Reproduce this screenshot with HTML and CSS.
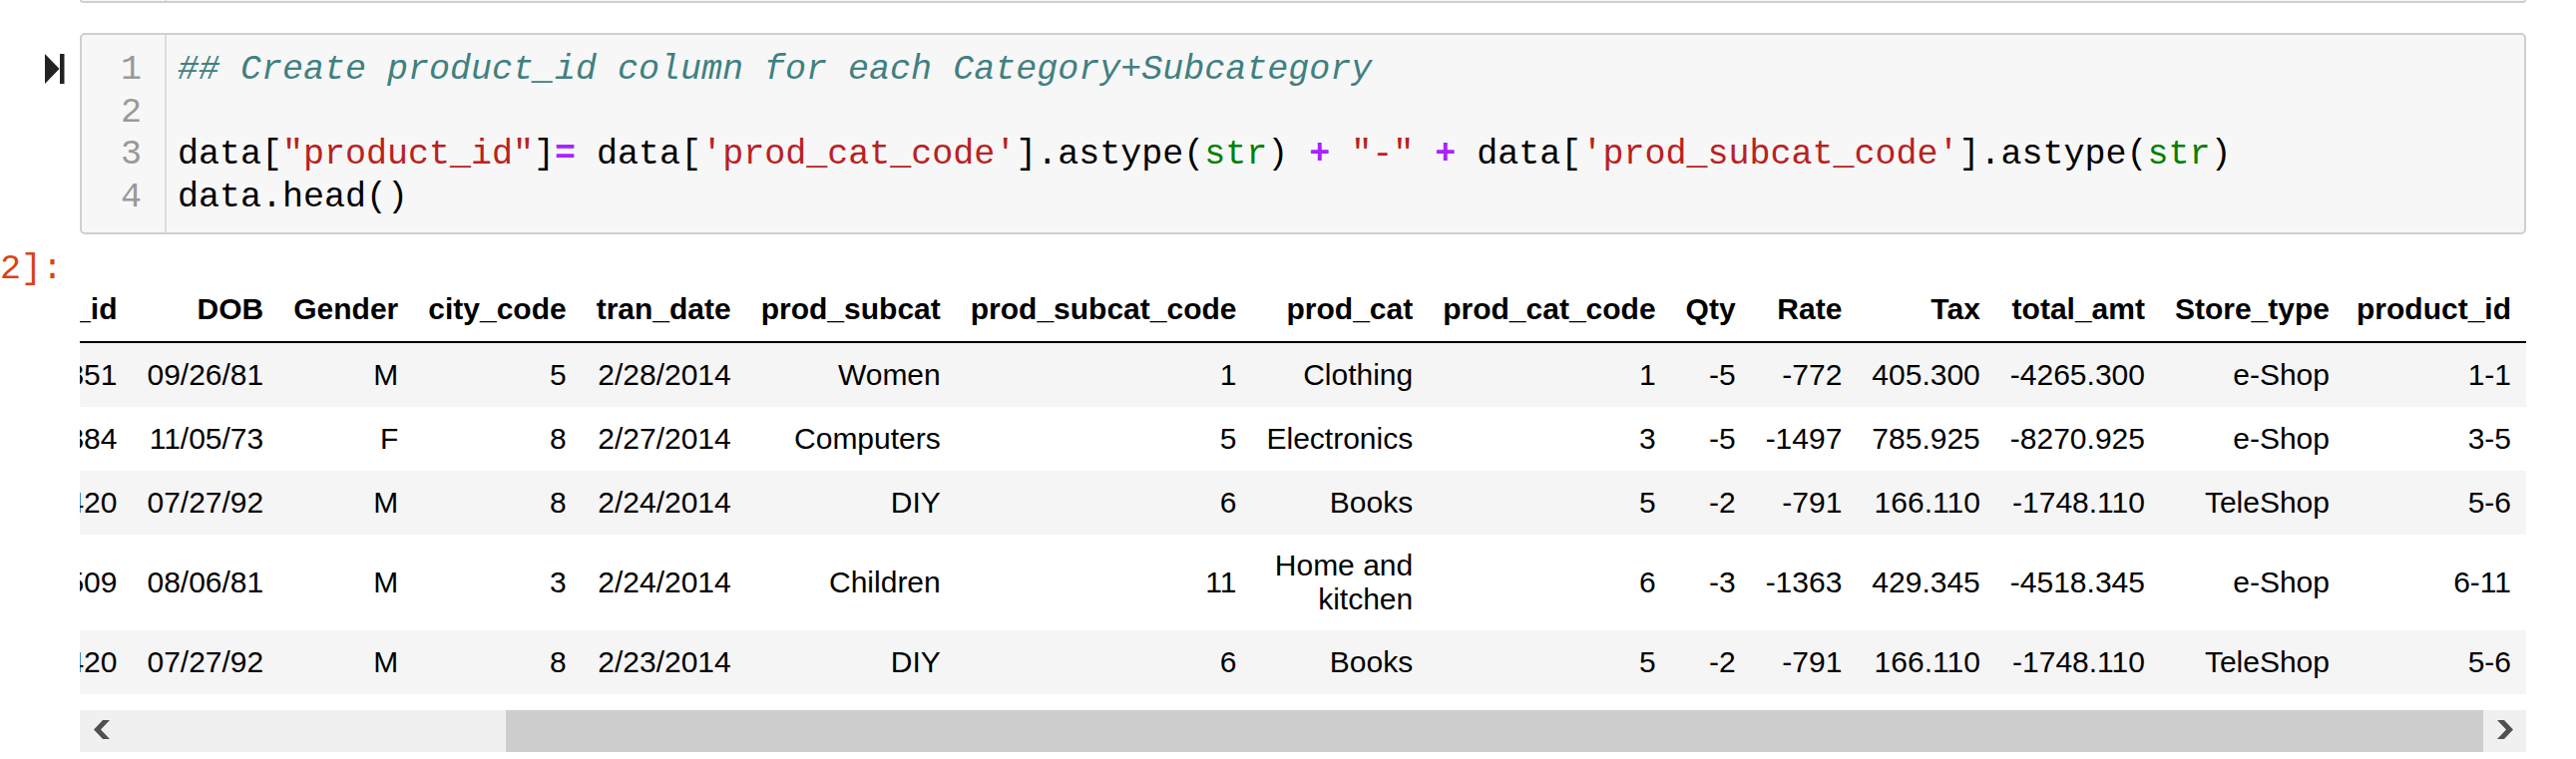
FILE: index.html
```html
<!DOCTYPE html>
<html lang="en">
<head>
<meta charset="utf-8">
<title>Notebook</title>
<link rel="stylesheet" href="styles.css">
</head>
<body>
<div class="notebook">
  <div class="cell prev-cell">
    <div class="prompt"></div>
    <div class="input-box prev-box">
      <div class="gutter"></div>
      <div class="code"></div>
    </div>
  </div>

  <div class="cell">
    <div class="input-row">
      <div class="prompt run-prompt">
        <svg class="run-icon" width="20" height="30" viewBox="0 0 20 30" aria-hidden="true">
          <polygon points="0,0 14.5,15 0,30" fill="#222"/>
          <rect x="15" y="0" width="4.5" height="30" fill="#222"/>
        </svg>
      </div>
      <div class="input-box">
        <div class="gutter">
          <div class="ln">1</div>
          <div class="ln">2</div>
          <div class="ln">3</div>
          <div class="ln">4</div>
        </div>
        <div class="code">
          <div class="line"><span class="cm">## Create product_id column for each Category+Subcategory</span></div>
          <div class="line"> </div>
          <div class="line">data[<span class="st">"product_id"</span>]<span class="op">=</span> data[<span class="st">'prod_cat_code'</span>].astype(<span class="bi">str</span>) <span class="op">+</span> <span class="st">"-"</span> <span class="op">+</span> data[<span class="st">'prod_subcat_code'</span>].astype(<span class="bi">str</span>)</div>
          <div class="line">data.head()</div>
        </div>
      </div>
    </div>

    <div class="output-row">
      <div class="prompt out-prompt"><span class="out-text">Out[52]:</span></div>
      <div class="output">
        <div class="df-wrap">
          <table class="dataframe">
            <thead>
              <tr>
                <th></th><th>transaction_id</th><th>cust_id</th><th>DOB</th><th>Gender</th><th>city_code</th><th>tran_date</th><th>prod_subcat</th><th>prod_subcat_code</th><th>prod_cat</th><th>prod_cat_code</th><th>Qty</th><th>Rate</th><th>Tax</th><th>total_amt</th><th>Store_type</th><th class="last">product_id</th>
              </tr>
            </thead>
            <tbody>
              <tr>
                <th>0</th><td>80712190438</td><td>270351</td><td>09/26/81</td><td>M</td><td>5</td><td>2/28/2014</td><td>Women</td><td>1</td><td>Clothing</td><td>1</td><td>-5</td><td>-772</td><td>405.300</td><td>-4265.300</td><td>e-Shop</td><td class="last">1-1</td>
              </tr>
              <tr>
                <th>1</th><td>29258453508</td><td>270384</td><td>11/05/73</td><td>F</td><td>8</td><td>2/27/2014</td><td>Computers</td><td>5</td><td>Electronics</td><td>3</td><td>-5</td><td>-1497</td><td>785.925</td><td>-8270.925</td><td>e-Shop</td><td class="last">3-5</td>
              </tr>
              <tr>
                <th>2</th><td>51750724947</td><td>273420</td><td>07/27/92</td><td>M</td><td>8</td><td>2/24/2014</td><td>DIY</td><td>6</td><td>Books</td><td>5</td><td>-2</td><td>-791</td><td>166.110</td><td>-1748.110</td><td>TeleShop</td><td class="last">5-6</td>
              </tr>
              <tr>
                <th>3</th><td>93274880719</td><td>271509</td><td>08/06/81</td><td>M</td><td>3</td><td>2/24/2014</td><td>Children</td><td>11</td><td class="wrap">Home and kitchen</td><td>6</td><td>-3</td><td>-1363</td><td>429.345</td><td>-4518.345</td><td>e-Shop</td><td class="last">6-11</td>
              </tr>
              <tr>
                <th>4</th><td>51750724947</td><td>273420</td><td>07/27/92</td><td>M</td><td>8</td><td>2/23/2014</td><td>DIY</td><td>6</td><td>Books</td><td>5</td><td>-2</td><td>-791</td><td>166.110</td><td>-1748.110</td><td>TeleShop</td><td class="last">5-6</td>
              </tr>
            </tbody>
          </table>
        </div>
        <div class="hscroll">
          <div class="sb-btn">
            <svg width="16" height="19" viewBox="0 0 16 19" aria-hidden="true"><polygon points="16,0 9,0 0,9.5 9,19 16,19 7,9.5" fill="#505050"/></svg>
          </div>
          <div class="sb-space"></div>
          <div class="sb-thumb"></div>
          <div class="sb-btn">
            <svg width="16" height="19" viewBox="0 0 16 19" aria-hidden="true"><polygon points="0,0 7,0 16,9.5 7,19 0,19 9,9.5" fill="#505050"/></svg>
          </div>
        </div>
      </div>
    </div>
  </div>
</div>
</body>
</html>
```

FILE: styles.css
```css
html, body {
  margin: 0;
  padding: 0;
  background: #ffffff;
}

body {
  font-family: "Liberation Sans", Arial, sans-serif;
  color: #000;
  overflow: hidden;
}

.notebook {
  width: 2532px;
}

.cell {
  display: flex;
  flex-direction: column;
}

.prev-cell {
  flex-direction: row;
  margin-bottom: 30px;
}

.prompt {
  width: 80px;
  flex: none;
}

.input-box {
  width: 2452px;
  box-sizing: border-box;
  display: flex;
  background: #f7f7f7;
  border: 2px solid #cfcfcf;
  border-radius: 5px;
}

.prev-box {
  height: 3px;
  border-top: none;
  border-radius: 0 0 5px 5px;
}

.gutter {
  width: 85px;
  flex: none;
  box-sizing: border-box;
  border-right: 2px solid #dddddd;
  padding: 14px 23px 14px 0;
  font-family: "Liberation Mono", "Courier New", monospace;
  font-size: 35px;
  line-height: 42.5px;
  color: #999999;
  text-align: right;
}

.prev-box .gutter {
  padding: 0;
}

.code {
  flex: 1;
  padding: 14px 0 14px 11px;
  font-family: "Liberation Mono", "Courier New", monospace;
  font-size: 35px;
  line-height: 42.5px;
  color: #000;
}

.prev-box .code {
  padding: 0;
}

.ln {
  height: 42.5px;
}

.line {
  height: 42.5px;
  white-space: pre;
}

.cm {
  color: #408080;
  font-style: italic;
}

.st {
  color: #ba2121;
}

.op {
  color: #aa22ff;
  font-weight: bold;
}

.bi {
  color: #008000;
}

.input-row {
  display: flex;
}

.run-prompt {
  display: flex;
  align-items: flex-start;
  padding-top: 21px;
  padding-left: 45px;
  box-sizing: border-box;
}

.run-icon {
  display: block;
}

.output-row {
  display: flex;
  margin-top: 14px;
}

.out-prompt {
  display: flex;
  justify-content: flex-end;
  box-sizing: border-box;
  padding-right: 17px;
  font-family: "Liberation Mono", "Courier New", monospace;
  font-size: 35px;
  line-height: 42.5px;
  color: #d84315;
  white-space: nowrap;
}

.out-text {
  flex: none;
}

.output {
  width: 2452px;
  flex: none;
}

.df-wrap {
  margin-top: 29px;
  display: flex;
  justify-content: flex-end;
  overflow: hidden;
}

.dataframe {
  border-collapse: collapse;
  border: none;
  font-size: 30px;
  color: #000;
}

.dataframe thead {
  border-bottom: 2px solid #000;
}

.dataframe th,
.dataframe td {
  text-align: right;
  vertical-align: middle;
  padding: 15px;
  line-height: normal;
  white-space: nowrap;
  border: none;
}

.dataframe tbody td {
  padding-top: 14px;
  padding-bottom: 14px;
}

.dataframe th {
  font-weight: bold;
}

.dataframe .last {
  padding-left: 12px;
}

.dataframe td.wrap {
  white-space: normal;
}

.dataframe tbody tr:nth-child(odd) {
  background: #f5f5f5;
}

.hscroll {
  margin-top: 16px;
  height: 42px;
  display: flex;
  background: #f0f0f0;
}

.sb-btn {
  width: 43px;
  flex: none;
  display: flex;
  align-items: center;
  justify-content: center;
}

.sb-btn svg {
  display: block;
  margin-top: -3px;
}

.sb-space {
  flex: 1;
}

.sb-thumb {
  width: 1982px;
  flex: none;
  background: #cdcdcd;
}
```
